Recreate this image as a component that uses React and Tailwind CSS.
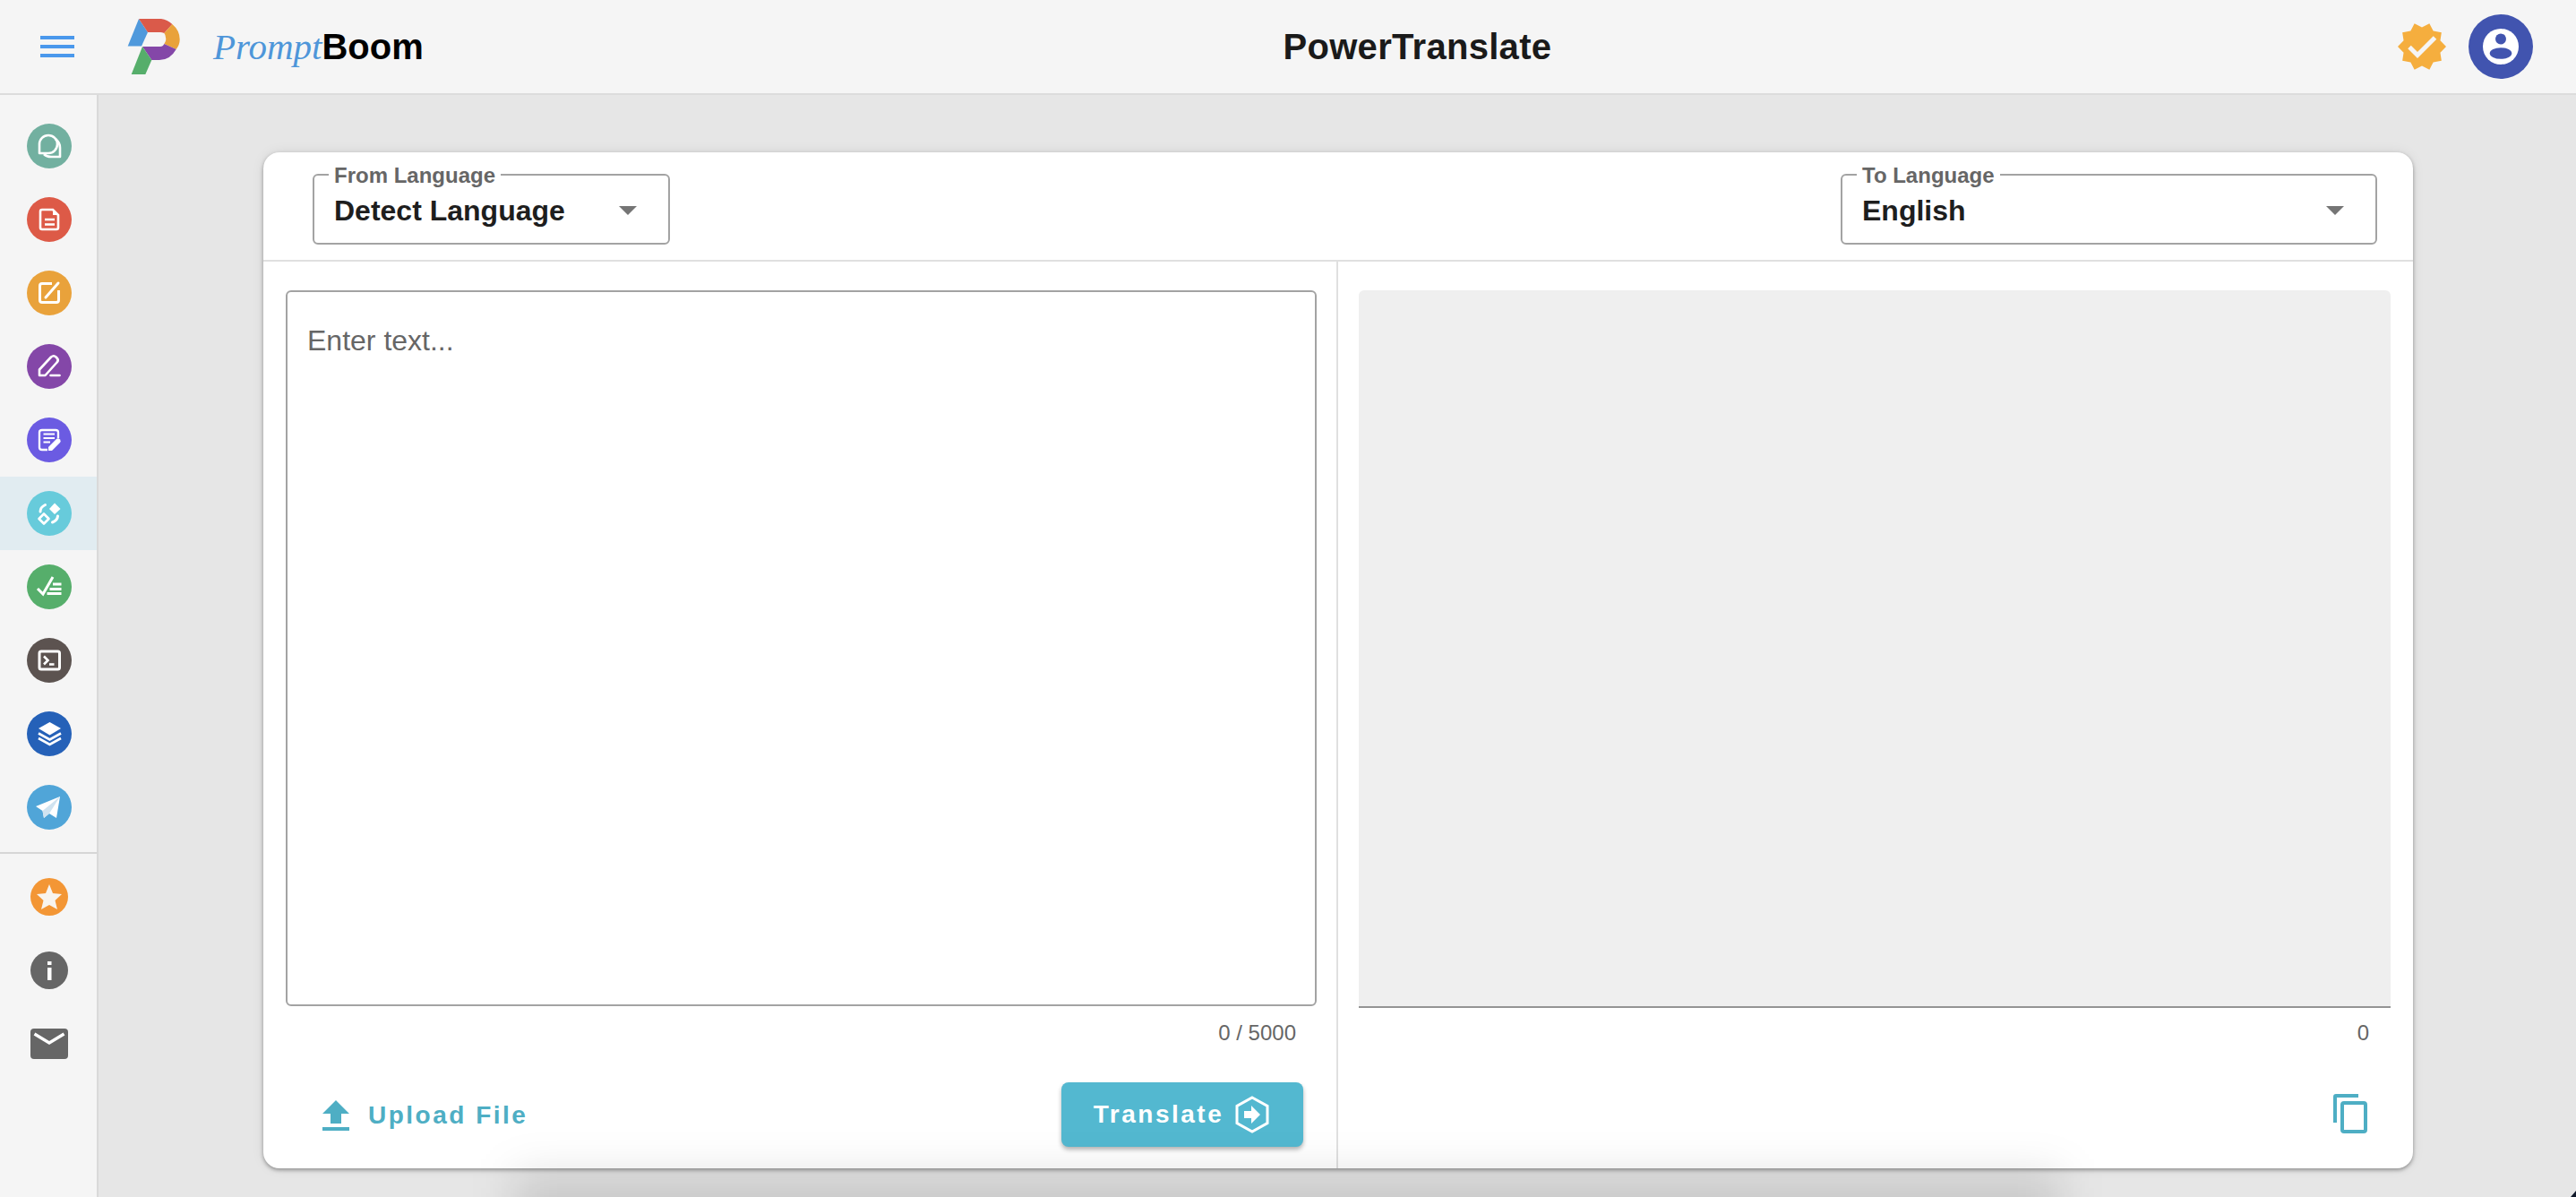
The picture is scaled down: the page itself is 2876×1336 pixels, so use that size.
import React from "react";

const sans = "font-['Liberation_Sans',Arial,sans-serif]";

// ten pointed seal behind the check mark
const sealPoints = Array.from({ length: 20 }, (_, i) => {
  const r = i % 2 === 0 ? 27 : 21.5;
  const a = (i * Math.PI) / 10;
  return `${(27 + r * Math.cos(a)).toFixed(2)},${(27 - r * Math.sin(a)).toFixed(2)}`;
}).join(" ");

function Logo() {
  return (
    <svg viewBox="0 0 59 63" className="ml-[59px] h-[63px] w-[59px] shrink-0">
      <path d="M13 0 L23 15 L16 30.5 L0.7 30.5 Z" fill="#4f99dc" />
      <path d="M13 0 H38 Q45 1 50.3 6 L41.3 16 Q39 15 37 15 H23 Z" fill="#da5a4a" />
      <path d="M50.3 6 Q58.7 13 58.7 23 Q58.7 29 54.7 34 L41.3 28 Q44 24 43 21 Q43 18 41.3 16 Z" fill="#e9a23b" />
      <path d="M17 31 H37 Q40 31 41.3 28 L54.7 34 Q48 46 36 46 H27.3 Z" fill="#8447a8" />
      <path d="M17 31 L27.3 46 L20.3 62 L4.7 62 Z" fill="#56ae6b" />
    </svg>
  );
}

function Navbar() {
  return (
    <header className={`flex h-[106px] shrink-0 items-center border-b-2 border-[#dcdcdc] bg-[#f5f5f5] ${sans}`}>
      <div className="ml-[45px] flex w-[38px] shrink-0 flex-col gap-[6px]">
        <span className="h-[4px] bg-[#4a98ec]" />
        <span className="h-[4px] bg-[#4a98ec]" />
        <span className="h-[4px] bg-[#4a98ec]" />
      </div>
      <Logo />
      <div className="ml-[37px] flex items-baseline">
        <span className="font-['Liberation_Serif',serif] text-[41px] italic leading-none text-[#4e96d9]">Prompt</span>
        <span className="text-[40px] font-bold leading-none text-black">Boom</span>
      </div>
      <div className="flex flex-1 justify-center pl-[15px]">
        <span className="text-[40px] font-bold leading-none tracking-[0.3px] text-[#1a1a1a]">PowerTranslate</span>
      </div>
      <svg viewBox="0 0 54 54" className="h-[54px] w-[54px] shrink-0">
        <polygon fill="#f5ae3e" points={sealPoints} />
        <path d="M13 27.5 L22 36.5 L41.5 17" fill="none" stroke="#f5f5f5" strokeWidth="5" />
      </svg>
      <svg viewBox="0 0 72 72" className="ml-[25px] mr-[48px] h-[72px] w-[72px] shrink-0">
        <circle cx="36" cy="36" r="36" fill="#4154af" />
        <circle cx="36" cy="36" r="20" fill="#fff" />
        <circle cx="36" cy="27.5" r="6" fill="#4154af" />
        <ellipse cx="36" cy="43.5" rx="12.3" ry="6.3" fill="#4154af" />
      </svg>
    </header>
  );
}

const line = { fill: "none", stroke: "#fff", strokeWidth: 2.6 };

function IconChat() {
  return (
    <>
      <path {...line} strokeLinejoin="round" d="M14 33 V23 A10 10 0 1 1 24 33 Z" />
      <path {...line} strokeLinejoin="round" d="M32 17 Q37 21 37 27 V37 H27 Q22 37 19 34" />
    </>
  );
}

function IconDoc() {
  return (
    <>
      <path {...line} d="M17 14 H29 L35 20 V34 Q35 36 33 36 H17 Q15 36 15 34 V16 Q15 14 17 14 Z" />
      <path d="M29 14 V20 H35 Z" fill="#fff" />
      <path {...line} d="M20 25 H31 M20 30.5 H31" />
    </>
  );
}

function IconEdit() {
  return (
    <>
      <path {...line} strokeWidth="3" d="M28 14.5 H17 Q14.5 14.5 14.5 17 V33 Q14.5 35.5 17 35.5 H33 Q35.5 35.5 35.5 33 V22" />
      <path {...line} strokeWidth="3" strokeLinecap="round" d="M21 30 L35 14" />
    </>
  );
}

function IconPen() {
  return (
    <>
      <path {...line} strokeLinejoin="round" d="M14 35 V28.5 L27 14.5 Q30 12 32.5 14.5 L33.5 15.5 Q36 18 33.5 20.5 L20.5 35 Z" />
      <path {...line} strokeLinecap="round" d="M26.5 35 H36.5" />
    </>
  );
}

function IconNote() {
  return (
    <>
      <path {...line} strokeWidth="2.3" d="M23 36 H17 Q14 36 14 33.5 V16.5 Q14 14 17 14 H32 Q35 14 35 16.5 V23" />
      <path {...line} strokeWidth="2.2" d="M18.5 18.5 H31 M18.5 23 H31 M18.5 27.5 H26" />
      <path fill="#fff" d="M24 37 V33 L33 24 Q35 22.5 37 24.5 Q38.5 26.5 37 28 L28 37 Z" />
    </>
  );
}

function IconShapes() {
  return (
    <>
      <path fill="#fff" d="M31 13.5 L37.5 20 L31 26 L25 20 Z" />
      <path {...line} strokeLinejoin="round" d="M19 25.5 L24.5 31 L19 36.5 L13.5 31 Z" />
      <path {...line} strokeWidth="3" strokeLinecap="round" d="M15 23 Q15 18 20.5 15.5" />
      <path {...line} strokeWidth="3" strokeLinecap="round" d="M28.5 35 Q34 33 34.5 28" />
    </>
  );
}

function IconChecklist() {
  return (
    <>
      <path {...line} strokeWidth="3" d="M12 27 L18 33 L29 14" />
      <path {...line} strokeWidth="3" d="M29 22 H38.5 M25.5 27.5 H38.5 M22.5 32.5 H38.5" />
    </>
  );
}

function IconTerminal() {
  return (
    <>
      <rect {...line} strokeWidth="3" x="14" y="15" width="22.5" height="20" rx="2" />
      <path {...line} strokeWidth="2.6" d="M19 20.5 L23.5 25 L19 29.5" />
      <path {...line} strokeWidth="2.6" d="M25 29.5 H30.5" />
    </>
  );
}

function IconLayers() {
  return (
    <>
      <path fill="#fff" d="M25.5 12 L38 19 L25.5 26.5 L13 19 Z" />
      <path {...line} d="M13 24.5 L25.5 31.5 L38 24.5 M13 30 L25.5 37 L38 30" />
    </>
  );
}

function IconPlane() {
  return (
    <>
      <path fill="#fff" d="M10 24 L37 13 L33 37 L25 32 L19 37 L17.5 29 Z" />
      <path fill="#cfe3f0" d="M17.5 29 L37 13 L25 32 L19 37 Z" />
    </>
  );
}

const tools = [
  { bg: "bg-[#72b0a0]", icon: <IconChat /> },
  { bg: "bg-[#dd5a47]", icon: <IconDoc /> },
  { bg: "bg-[#e9a23b]", icon: <IconEdit /> },
  { bg: "bg-[#8447a8]", icon: <IconPen /> },
  { bg: "bg-[#6b5be2]", icon: <IconNote /> },
  { bg: "bg-[#67cbdb]", icon: <IconShapes />, active: true },
  { bg: "bg-[#56ae6b]", icon: <IconChecklist /> },
  { bg: "bg-[#5c5350]", icon: <IconTerminal /> },
  { bg: "bg-[#2561b8]", icon: <IconLayers /> },
  { bg: "bg-[#50a5d8]", icon: <IconPlane /> },
];

function Sidebar() {
  return (
    <aside className="flex w-[110px] shrink-0 flex-col border-r-2 border-[#d9d9d9] bg-[#f5f5f5] pt-[16px]">
      {tools.map((tool, i) => (
        <div key={i} className={`flex h-[82px] items-center justify-center pl-[2px] ${tool.active ? "bg-[#e1ecf1]" : ""}`}>
          <div className={`h-[50px] w-[50px] rounded-full ${tool.bg}`}>
            <svg viewBox="0 0 50 50" className="h-[50px] w-[50px]">{tool.icon}</svg>
          </div>
        </div>
      ))}
      <div className="mt-[9px] h-[2px] bg-[#d6d6d6]" />
      <div className="mt-[7px] flex h-[82px] items-center justify-center pl-[2px]">
        <svg viewBox="0 0 42 42" className="h-[42px] w-[42px]">
          <circle cx="21" cy="21" r="21" fill="#f39635" />
          <path d="M21 7 L25 17 L35 18 L27.5 25 L30 35 L21 30 L12 35 L14.5 25 L7 18 L17 17 Z" fill="#f8f4ee" />
        </svg>
      </div>
      <div className="flex h-[82px] items-center justify-center pl-[2px]">
        <svg viewBox="0 0 42 42" className="h-[42px] w-[42px]">
          <circle cx="21" cy="21" r="21" fill="#666" />
          <rect x="19" y="11" width="4.5" height="4" fill="#fff" />
          <rect x="19" y="18" width="4.5" height="14" fill="#fff" />
        </svg>
      </div>
      <div className="flex h-[82px] items-center justify-center pl-[2px]">
        <svg viewBox="0 0 42 34" className="h-[34px] w-[42px]">
          <rect width="42" height="34" rx="4" fill="#666" />
          <path d="M4.5 6 L21 16 L37.5 6" fill="none" stroke="#fff" strokeWidth="3.4" />
        </svg>
      </div>
    </aside>
  );
}

function LanguageSelect({ label, value, className }) {
  return (
    <div className={`relative h-[79px] rounded-[6px] border-2 border-[#a3a3a3] pl-[22px] pr-[35px] ${className}`}>
      <span className="absolute left-[16px] top-[-13px] bg-white px-[6px] text-[24px] font-bold leading-[26px] text-[#666]">
        {label}
      </span>
      <div className="flex h-full items-center justify-between pt-[3px]">
        <span className="text-[32px] font-bold leading-none text-[#1e1e1e]">{value}</span>
        <span className="h-0 w-0 border-x-[10px] border-t-[10px] border-x-transparent border-t-[#757575]" />
      </div>
    </div>
  );
}

function TranslateCard() {
  return (
    <section className={`mx-auto mt-[64px] flex h-[1134px] w-[2400px] flex-col rounded-[18px] bg-white shadow-[0_2px_4px_rgba(0,0,0,0.35),0_0_14px_rgba(0,0,0,0.08)] ${sans}`}>
      <div className="flex h-[122px] shrink-0 items-start justify-between border-b-2 border-[#e0e0e0] pl-[55px] pr-[40px] pt-[24px]">
        <LanguageSelect label="From Language" value="Detect Language" className="w-[399px]" />
        <LanguageSelect label="To Language" value="English" className="w-[599px]" />
      </div>
      <div className="flex flex-1">
        <div className="flex w-[1200px] shrink-0 flex-col border-r-2 border-[#e0e0e0] pl-[25px] pr-[22px] pt-[32px]">
          <div className="h-[799px] rounded-[6px] border-2 border-[#a3a3a3] px-[22px] pt-[34px] text-[32px] leading-[40px] text-[#666]">
            Enter text...
          </div>
          <div className="mt-[16px] pr-[23px] text-right text-[24px] leading-[28px] text-[#666]">0 / 5000</div>
          <div className="mt-[41px] flex items-center justify-between pl-[41px] pr-[15px]">
            <button className="flex items-center gap-[21px] pt-[2px] text-[28px] font-bold tracking-[2.5px] text-[#4eaec4]">
              <svg viewBox="0 0 30 34" className="h-[34px] w-[30px]">
                <path d="M15 0 L30 15 H21 V26 H9 V15 H0 Z M0 30 H30 V34 H0 Z" fill="#4eaec4" />
              </svg>
              Upload File
            </button>
            <button className="flex h-[72px] w-[270px] items-center justify-center gap-[13px] rounded-[8px] bg-[#53b8d0] pr-[2px] text-[28px] font-bold tracking-[2.5px] text-white shadow-[0_3px_5px_rgba(0,0,0,0.3)]">
              Translate
              <svg viewBox="0 0 38 42" className="h-[42px] w-[38px]">
                <path d="M19 2 L36 11.5 V30.5 L19 40 L2 30.5 V11.5 Z" fill="none" stroke="#fff" strokeWidth="3" />
                <path d="M10 17 H18 V11 L28 21 L18 31 V25 H10 Z" fill="#fff" />
              </svg>
            </button>
          </div>
        </div>
        <div className="flex flex-1 flex-col pl-[23px] pr-[25px] pt-[32px]">
          <div className="h-[801px] rounded-t-[6px] border-b-2 border-[#949494] bg-[#efefef]" />
          <div className="mt-[14px] pr-[24px] text-right text-[24px] leading-[28px] text-[#666]">0</div>
          <div className="mt-[54px] flex justify-end pr-[26px]">
            <svg viewBox="0 0 38 44" className="h-[44px] w-[38px]">
              <path d="M2 32 V3 Q2 2 3 2 H28" fill="none" stroke="#4eaec4" strokeWidth="4" />
              <rect x="10" y="10" width="26" height="32" rx="2" fill="none" stroke="#4eaec4" strokeWidth="4" />
            </svg>
          </div>
        </div>
      </div>
    </section>
  );
}

export default function App() {
  return (
    <div className="relative flex h-[1336px] w-[2876px] flex-col overflow-hidden bg-[#e6e6e6]">
      <Navbar />
      <div className="flex flex-1">
        <Sidebar />
        <main className="flex-1 pl-[2px]">
          <TranslateCard />
        </main>
      </div>
      {/* soft shadow rising from the bottom edge of the window */}
      <div className="pointer-events-none absolute left-[575px] top-[1310px] h-[90px] w-[1725px] bg-black/12 blur-[24px]" />
      {/* corner of the window behind the page */}
      <div className="absolute bottom-0 right-0 h-0 w-0 border-b-[7px] border-l-[6px] border-b-[#10192a] border-l-transparent" />
    </div>
  );
}
